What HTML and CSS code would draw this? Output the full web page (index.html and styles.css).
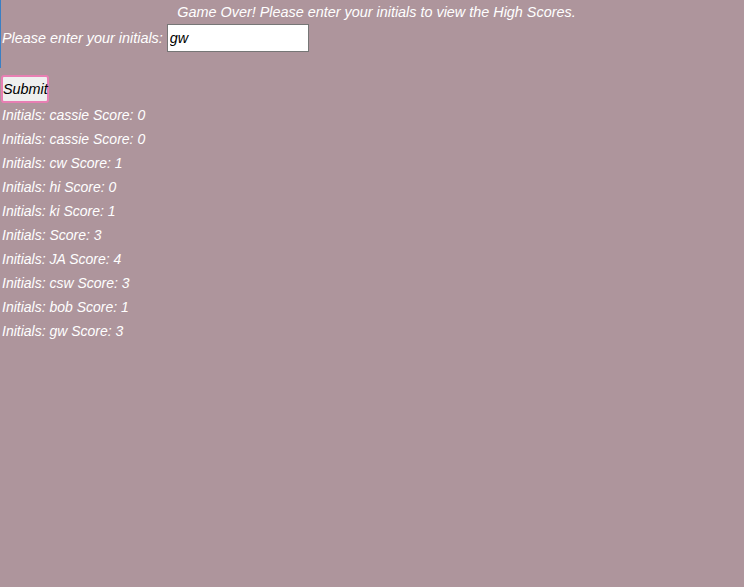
FILE: index.html
```html
<!DOCTYPE html>
<html>
<head>
<meta charset="utf-8">
<link rel="stylesheet" href="styles.css">
</head>
<body>
<div class="top">
  <h1 class="title">Game Over! Please enter your initials to view the High Scores.</h1>
  <div class="entry">
    <label class="label" for="initials">Please enter your initials:</label>
    <input class="field" id="initials" type="text" value="gw">
  </div>
</div>
<div class="spacer"></div>
<button class="submit" type="button">Submit</button>
<ul class="scores">
  <li>Initials: cassie Score: 0</li>
  <li>Initials: cassie Score: 0</li>
  <li>Initials: cw Score: 1</li>
  <li>Initials: hi Score: 0</li>
  <li>Initials: ki Score: 1</li>
  <li>Initials: Score: 3</li>
  <li>Initials: JA Score: 4</li>
  <li>Initials: csw Score: 3</li>
  <li>Initials: bob Score: 1</li>
  <li>Initials: gw Score: 3</li>
</ul>
</body>
</html>
```

FILE: styles.css
```css
html, body {
  margin: 0;
  padding: 0;
  background: #ae959c;
}
body {
  font-family: "Liberation Sans", Arial, sans-serif;
  font-style: italic;
  font-size: 14.4px;
  color: #ffffff;
  height: 587px;
  overflow: hidden;
}
.top {
  border-left: 1px solid #3a7fc4;
  height: 68px;
  box-sizing: border-box;
}
.title {
  margin: 0;
  font-size: 14.4px;
  font-weight: normal;
  text-align: center;
  line-height: 24px;
  height: 24px;
  padding-left: 8px;
}
.entry {
  display: flex;
  align-items: center;
  gap: 4px;
  height: 28px;
  margin-left: 1px;
}
.label {
  line-height: 24px;
}
.field {
  width: 142px;
  height: 28px;
  box-sizing: border-box;
  border: 1px solid #767676;
  background: #ffffff;
  font-family: inherit;
  font-style: italic;
  font-size: 14.4px;
  color: #000;
  padding: 0 2px;
  margin: 0;
  outline: none;
}
.spacer {
  height: 7px;
}
.submit {
  display: block;
  margin: 0 0 0 1px;
  width: 48px;
  height: 28px;
  box-sizing: border-box;
  border: 2px solid #e87fb3;
  border-radius: 3px;
  background: #efefef;
  font-family: inherit;
  font-style: italic;
  font-size: 14.4px;
  color: #000;
  padding: 0;
}
.scores {
  list-style: none;
  margin: 0;
  padding: 0 0 0 2px;
  font-size: 14px;
}
.scores li {
  line-height: 24px;
}
```
